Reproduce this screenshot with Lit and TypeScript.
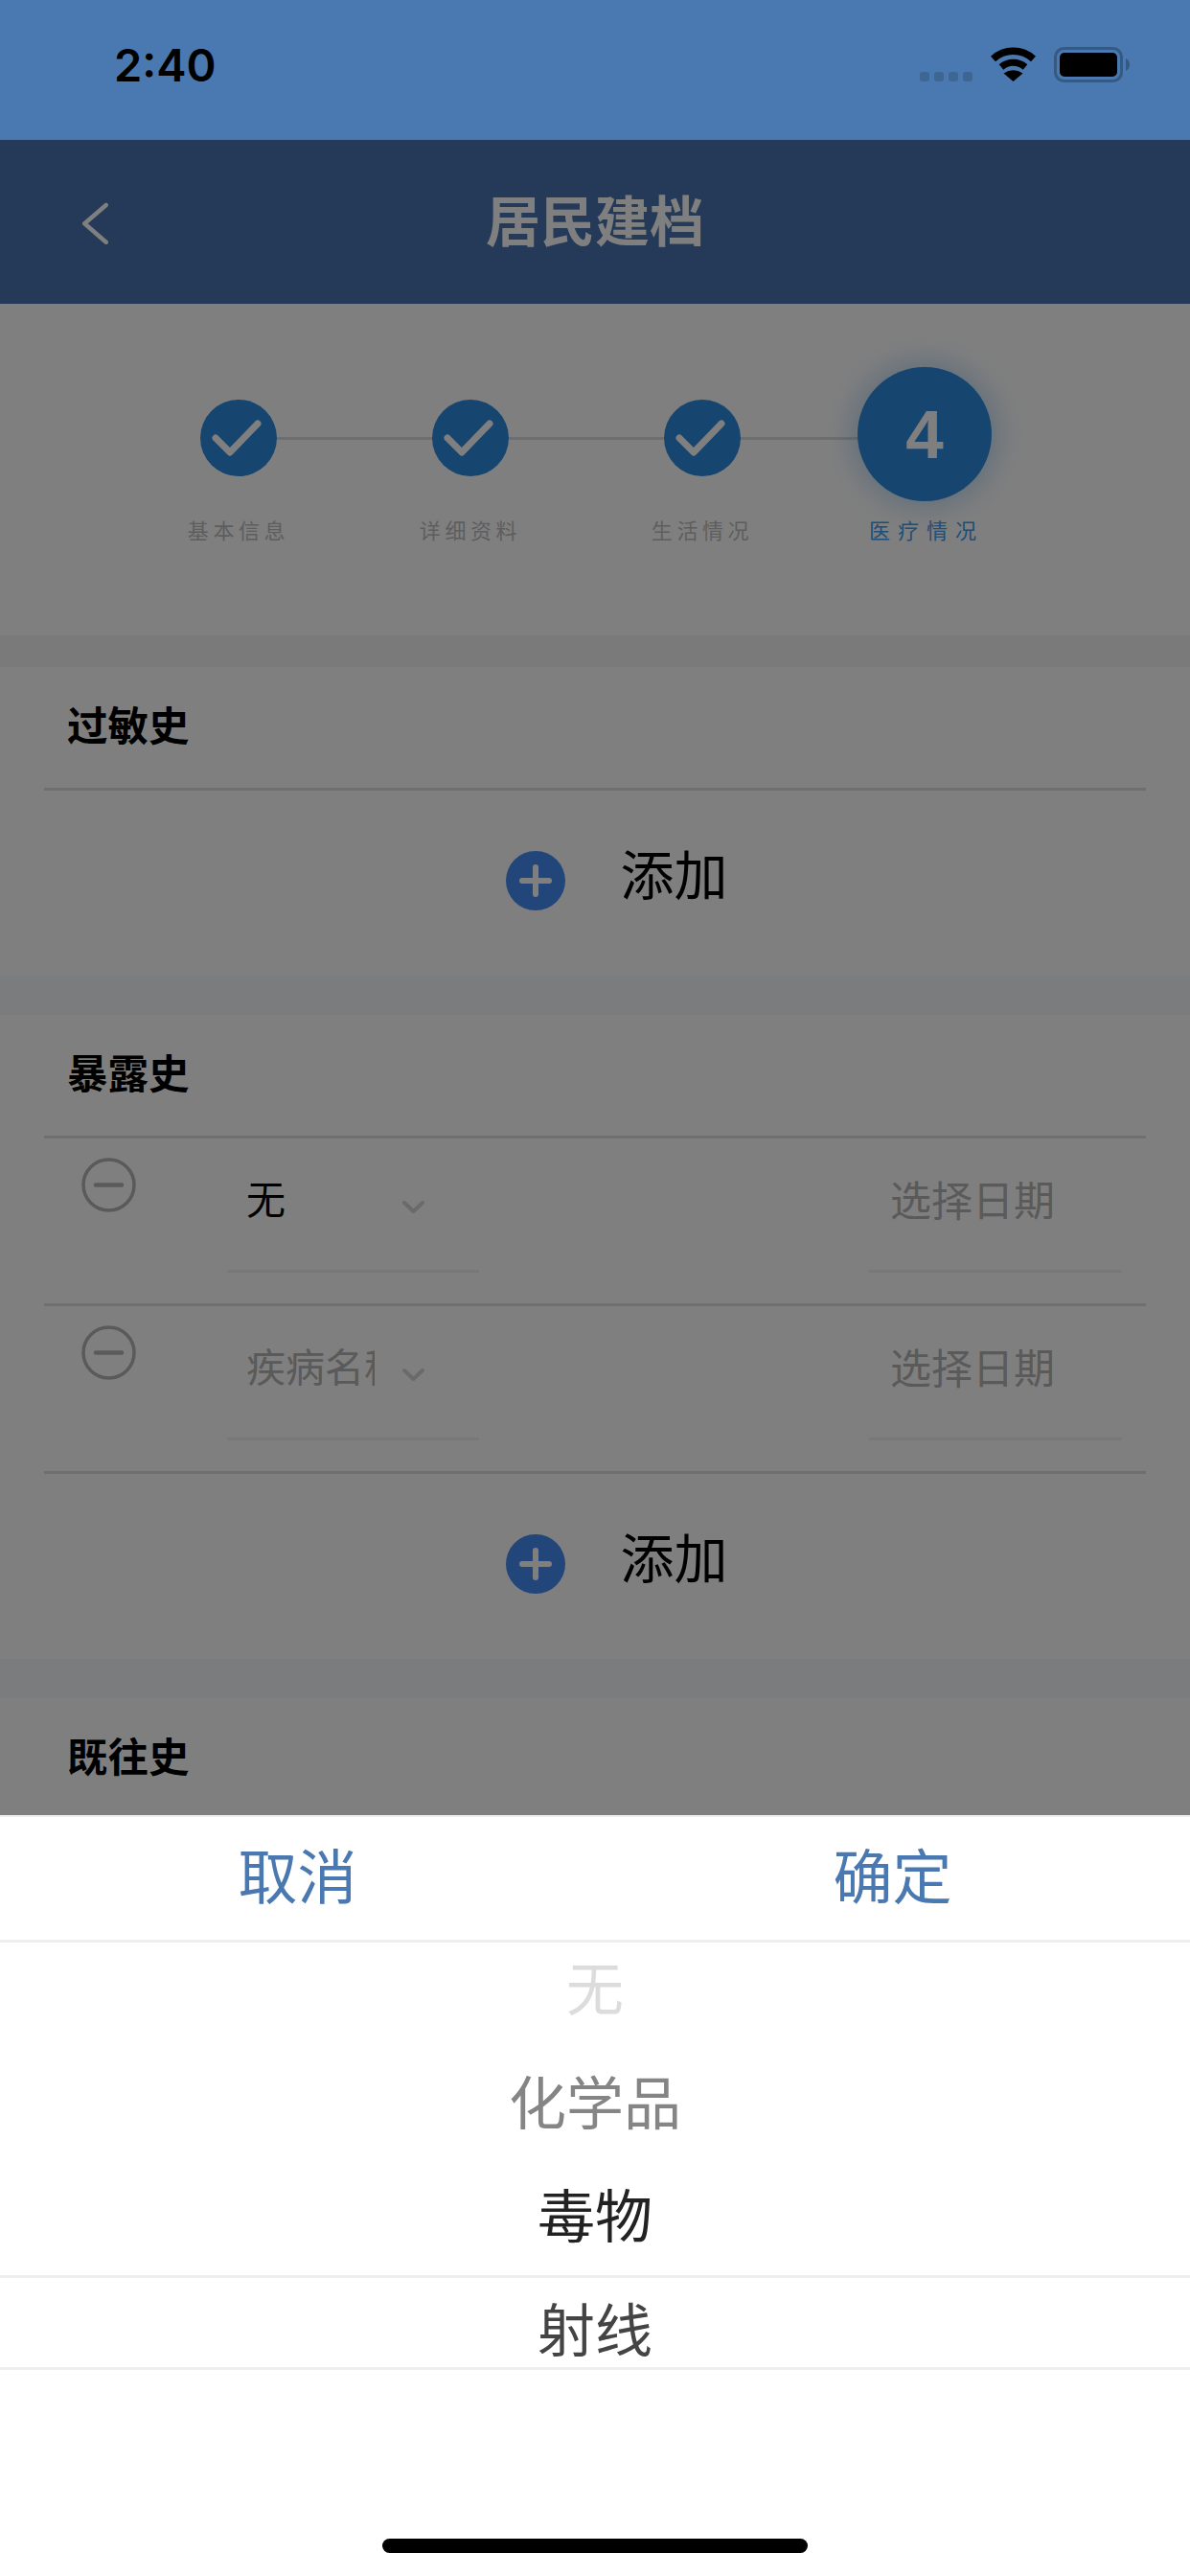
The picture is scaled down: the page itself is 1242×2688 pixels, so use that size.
import { LitElement, html, css, svg } from "lit";
import { customElement } from "lit/decorators.js";

const CJK = css`"Noto Sans CJK SC", "Liberation Sans", sans-serif`;

const check = svg`<svg class="ico" viewBox="0 0 80 80"><path d="M16 40 L31 55 L60 25" fill="none" stroke="#fff" stroke-width="7" stroke-linecap="round" stroke-linejoin="round"/></svg>`;
const plus = svg`<svg class="plus" viewBox="0 0 62 62"><circle cx="31" cy="31" r="31" fill="#448cf5"/><path d="M17 31H45M31 17V45" stroke="#fff" stroke-width="6" stroke-linecap="round"/></svg>`;
const minus = svg`<svg class="minus" viewBox="0 0 57 57"><circle cx="28.5" cy="28.5" r="26.5" fill="none" stroke="#b4b4b4" stroke-width="3.5"/><path d="M15 28.5H42" stroke="#b4b4b4" stroke-width="4.5" stroke-linecap="round"/></svg>`;
const chev = svg`<svg class="chev" viewBox="0 0 24 14"><path d="M3 3 L12.5 12 L22 3" fill="none" stroke="#d4d4d4" stroke-width="4" stroke-linecap="round" stroke-linejoin="round"/></svg>`;

@customElement("app-root")
export class AppRoot extends LitElement {
  static styles = css`
    :host { display: block; position: relative; width: 1242px; height: 2688px; overflow: hidden; background: #fff; font-family: ${CJK}; color: #000; }
    .status { height: 146px; background: #4a78b0; display: flex; align-items: flex-start; position: relative; z-index: 3; }
    .time { font-family: Inter, "Liberation Sans", sans-serif; font-weight: 600; font-size: 47px; line-height: 50px; margin: 43px 0 0 119px; }
    .status-right { margin-left: auto; margin-right: 63px; display: flex; align-items: flex-start; padding-top: 49px; }
    .dots { display: flex; gap: 5px; margin-top: 26px; margin-right: 19px; }
    .dots i { width: 10px; height: 10px; border-radius: 3px; background: #3d6693; }
    .wifi { width: 47px; height: 36px; margin-right: 19px; }
    .batt { width: 79px; height: 37px; }

    .nav { height: 171px; background: #4a74b2; display: flex; align-items: center; justify-content: center; position: relative; }
    .back { position: absolute; left: 85px; top: 65px; width: 30px; height: 46px; }
    .title { font-size: 57px; font-weight: 700; color: #fff; line-height: 1; margin-top: -8px; }

    .stepper { height: 346px; box-sizing: border-box; padding: 66px 0 0 128px; }
    .track { display: flex; position: relative; }
    .track::before { content: ""; position: absolute; left: 121px; width: 716px; top: 73px; height: 3px; background: #dcdcdc; }
    .step { width: 242px; display: flex; flex-direction: column; align-items: center; position: relative; }
    .step.cur { width: 222px; }
    .box { height: 148px; margin-bottom: 6px; display: flex; align-items: center; }
    .circle { width: 80px; height: 80px; border-radius: 50%; background: #2c8ae0; }
    .ico { display: block; width: 80px; height: 80px; }
    .big { align-self: flex-start; width: 140px; height: 140px; border-radius: 50%; background: #2c8ae0; box-shadow: 0 0 30px 6px rgba(44, 138, 224, .3); color: #fff; display: flex; align-items: center; justify-content: center; font-family: "Liberation Sans", sans-serif; font-weight: 700; font-size: 71px; line-height: 1; }
    .lab { font-size: 22px; line-height: 30px; letter-spacing: 4.6px; color: #bcbcbc; white-space: nowrap; }
    .lab.on { color: #3e9cf0; letter-spacing: 8px; margin-left: 4px; }

    .band { height: 33px; background: #f4f4f4; }
    .band.b2 { height: 41px; background: #f6f8fc; }
    .sec { padding: 0 46px; }
    .head { padding: 36px 0 0 24px; font-size: 42.5px; font-weight: 700; line-height: 46px; border-bottom: 3px solid #dedede; height: 90px; }
    .add { height: 193px; display: flex; align-items: center; justify-content: center; padding-left: 45px; box-sizing: border-box; }
    .plus { width: 62px; height: 62px; margin-top: -6px; }
    .add span { font-size: 56px; line-height: 60px; margin-left: 58px; margin-top: -24px; }
    .row { height: 172px; border-bottom: 3px solid #dedede; display: flex; align-items: flex-start; }
    .minus { width: 57px; height: 57px; margin: 20px 0 0 39px; flex: none; }
    .sel { width: 263px; height: 140px; margin-left: 95px; box-sizing: border-box; border-bottom: 3px solid #f0f0f0; display: flex; align-items: flex-start; padding: 37px 0 0 20px; }
    .sel .val { width: 134px; white-space: nowrap; font-size: 41px; line-height: 48px; }
    .sel .val.ph { color: #b4b4b4; overflow: hidden; }
    .chev { width: 24px; height: 14px; margin: 27px 0 0 28px; }
    .date { width: 264px; height: 140px; margin-left: auto; margin-right: 25px; box-sizing: border-box; border-bottom: 3px solid #f0f0f0; padding: 38px 0 0 22px; font-size: 43px; line-height: 48px; color: #b4b4b4; }

    .scrim { position: absolute; left: 0; right: 0; top: 146px; bottom: 0; background: rgba(0, 0, 0, .5); }
    .sheet { position: absolute; left: 0; right: 0; top: 1894px; bottom: 0; background: #fff; border-top: 2px solid #eee; overflow: hidden; }
    .bar { height: 128px; display: flex; border-bottom: 3px solid #eee; }
    .bar span { flex: 1; text-align: center; font-size: 62px; line-height: 118px; color: #4a78b0; }
    .picker { display: flex; flex-direction: column; align-items: center; margin-top: -14px; }
    .opt { height: 118.6px; line-height: 118px; font-size: 60px; }
    .o0 { color: #dcdcdc; }
    .o1 { color: #858585; }
    .o2 { color: #222; }
    .o3 { color: #444; }
    .sel-line { position: absolute; left: 0; right: 0; height: 3px; background: #eee; }
    .l1 { top: 478px; }
    .l2 { top: 574px; }
    .home { position: absolute; left: 399px; bottom: 24px; width: 444px; height: 15px; border-radius: 8px; background: #000; }
  `;

  private row(val: string, ph: boolean) {
    return html`<div class="row">${minus}
      <div class="sel"><div class="val ${ph ? "ph" : ""}">${val}</div>${chev}</div>
      <div class="date">选择日期</div></div>`;
  }

  render() {
    return html`
      <div class="status">
        <div class="time">2:40</div>
        <div class="status-right">
          <div class="dots"><i></i><i></i><i></i><i></i></div>
          <svg class="wifi" viewBox="0 0 47 36">
            <path d="M2.5 12.5 A31 31 0 0 1 44.5 12.5" fill="none" stroke="#000" stroke-width="7.5"/>
            <path d="M11 21 A19 19 0 0 1 36 21" fill="none" stroke="#000" stroke-width="7"/>
            <path d="M23.5 36 L13.5 27.5 Q23.5 21 33.5 27.5 Z" fill="#000"/>
          </svg>
          <svg class="batt" viewBox="0 0 79 37">
            <rect x="1.5" y="1.5" width="69" height="34" rx="9" fill="none" stroke="#36597f" stroke-width="3"/>
            <rect x="6" y="6" width="60" height="25" rx="5" fill="#000"/>
            <path d="M75 12 Q79 14 79 18.5 Q79 23 75 25 Z" fill="#36597f"/>
          </svg>
        </div>
      </div>
      <div class="nav">
        <svg class="back" viewBox="0 0 30 46"><path d="M25.7 3 L3.3 22.3 L25.7 41.7" fill="none" stroke="#fff" stroke-width="4.5" stroke-linecap="round" stroke-linejoin="round"/></svg>
        <div class="title">居民建档</div>
      </div>
      <div class="stepper">
        <div class="track">
          ${["基本信息", "详细资料", "生活情况"].map(
            (t) => html`<div class="step"><div class="box"><div class="circle">${check}</div></div><div class="lab">${t}</div></div>`
          )}
          <div class="step cur"><div class="box"><div class="big">4</div></div><div class="lab on">医疗情况</div></div>
        </div>
      </div>
      <div class="band"></div>
      <div class="sec">
        <div class="head">过敏史</div>
        <div class="add">${plus}<span>添加</span></div>
      </div>
      <div class="band b2"></div>
      <div class="sec">
        <div class="head">暴露史</div>
        ${this.row("无", false)}
        ${this.row("疾病名称", true)}
        <div class="add">${plus}<span>添加</span></div>
      </div>
      <div class="band b2"></div>
      <div class="sec">
        <div class="head">既往史</div>
      </div>
      <div class="scrim"></div>
      <div class="sheet">
        <div class="bar"><span>取消</span><span>确定</span></div>
        <div class="picker">
          <div class="opt o0">无</div>
          <div class="opt o1">化学品</div>
          <div class="opt o2">毒物</div>
          <div class="opt o3">射线</div>
        </div>
        <div class="sel-line l1"></div>
        <div class="sel-line l2"></div>
        <div class="home"></div>
      </div>
    `;
  }
}
